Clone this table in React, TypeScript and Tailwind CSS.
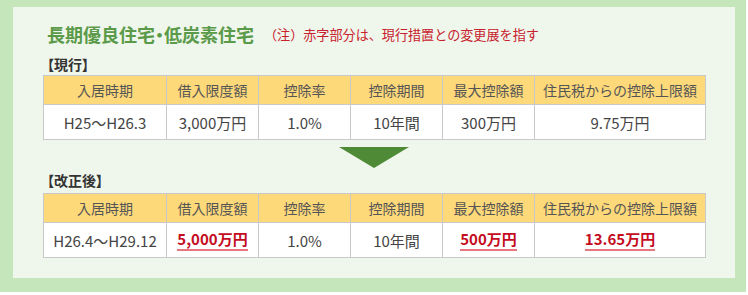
import React from "react";

const headers = ["入居時期", "借入限度額", "控除率", "控除期間", "最大控除額", "住民税からの控除上限額"];
const widths = [123, 92, 92, 92, 92, 171];

type Cell = { t: string; red?: boolean };

const Red = ({ children }: { children: React.ReactNode }) => (
  <span className="inline-block font-bold text-[#c40d1e] text-[15px] leading-[18px] border-b-2 border-[#e8767e] pb-[1px]">
    {children}
  </span>
);

function Table({ row }: { row: Cell[] }) {
  return (
    <table className="border-collapse w-[662px] table-fixed">
      <colgroup>
        {widths.map((w, i) => (
          <col key={i} style={{ width: w }} />
        ))}
      </colgroup>
      <tbody>
        <tr className="h-[29px] bg-[#fed97a]">
          {headers.map((h) => (
            <td key={h} className="border border-[#c9c9c9] text-center text-[14px] text-[#555] p-0 leading-none">
              {h}
            </td>
          ))}
        </tr>
        <tr className="h-[35px] bg-white">
          {row.map((c, i) => (
            <td key={i} className="border border-[#c9c9c9] text-center text-[15px] text-[#444] p-0 leading-none">
              {c.red ? <Red>{c.t}</Red> : c.t}
            </td>
          ))}
        </tr>
      </tbody>
    </table>
  );
}

export default function App() {
  return (
    <div
      className="w-[748px] h-[295px] bg-white"
      style={{ fontFamily: '"Noto Sans CJK JP", "Noto Sans", sans-serif' }}
    >
      <div className="w-[746px] h-[292px] bg-[#c5e6bb] pt-[7px] pl-[13px] pr-[11px] pb-[14px]">
        <div className="w-[722px] h-[271px] bg-[#eff6eb] px-[30px] pt-[15px] flex flex-col">
          <div className="h-[24px] flex items-center pl-[4px]">
            <span className="text-[18px] font-bold text-[#5a9a49] leading-none [font-feature-settings:'palt']">長期優良住宅・低炭素住宅</span>
            <span className="ml-[10px] text-[13.1px] text-[#c8202c] leading-none mt-[1px]">（注）赤字部分は、現行措置との変更展を指す</span>
          </div>
          <div className="h-[18px] mt-[9px] flex items-center pl-[4px] text-[14px] font-bold text-[#333] leading-none [font-feature-settings:'palt']">【現行】</div>
          <div className="mt-[2px]">
            <Table
              row={[
                { t: "H25〜H26.3" },
                { t: "3,000万円" },
                { t: "1.0%" },
                { t: "10年間" },
                { t: "300万円" },
                { t: "9.75万円" },
              ]}
            />
          </div>
          <div className="mt-[7px] flex justify-center">
            <svg width="70" height="21" viewBox="0 0 70 21">
              <polygon points="0,0 70,0 35,21" fill="#4f8a37" />
            </svg>
          </div>
          <div className="h-[18px] mt-[3px] flex items-center pl-[4px] text-[14px] font-bold text-[#333] leading-none [font-feature-settings:'palt']">【改正後】</div>
          <div className="mt-[4px]">
            <Table
              row={[
                { t: "H26.4〜H29.12" },
                { t: "5,000万円", red: true },
                { t: "1.0%" },
                { t: "10年間" },
                { t: "500万円", red: true },
                { t: "13.65万円", red: true },
              ]}
            />
          </div>
        </div>
      </div>
    </div>
  );
}
